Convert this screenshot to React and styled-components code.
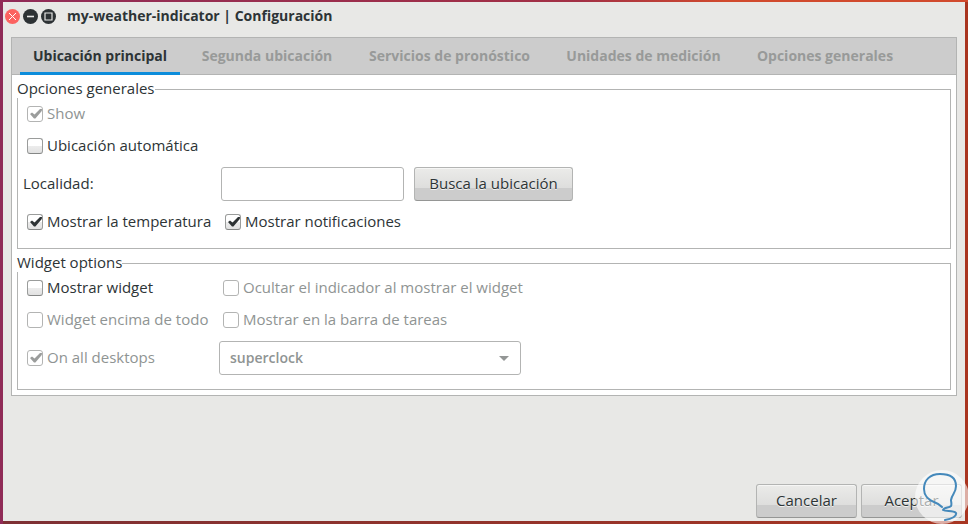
import React, { useState } from 'react';
import styled, { createGlobalStyle } from 'styled-components';

const GlobalStyle = createGlobalStyle`
  * {
    box-sizing: border-box;
  }

  body {
    margin: 0;
    color: #2d3436;
    font-family: 'Open Sans', 'Noto Sans', sans-serif;
    font-size: 15px;
    line-height: 16px;
  }

  button, input, select {
    margin: 0;
    color: inherit;
    font: inherit;
  }
`;

const tabs = [
  { name: 'Ubicación principal', width: 160 },
  { name: 'Segunda ubicación', width: 158 },
  { name: 'Servicios de pronóstico', width: 191 },
  { name: 'Unidades de medición', width: 181 },
  { name: 'Opciones generales', width: 166 },
];

const Check = ({ children, ...props }) => (
  <CheckLabel>
    <CheckBox>
      <input type="checkbox" {...props} />
      <svg viewBox="0 0 16 16" aria-hidden="true">
        <path d="M3 8 L5 6.4 L7.5 8.6 L13 3 L15 3 L14.8 5 L8.4 12.6 L7 12.6 Z" />
      </svg>
    </CheckBox>
    <Caption>{children}</Caption>
  </CheckLabel>
);

const App = () => {
  const [active, setActive] = useState(0);

  return (
    <Desktop>
      <GlobalStyle />
      <Window>
        <TitleBar>
          <WindowButton $close aria-label="Cerrar">
            <svg viewBox="0 0 15 15"><path d="M4 4 L11 11 M11 4 L4 11" /></svg>
          </WindowButton>
          <WindowButton aria-label="Minimizar">
            <svg viewBox="0 0 15 15"><path d="M4 7.5 H11" strokeWidth="1.6" /></svg>
          </WindowButton>
          <WindowButton aria-label="Maximizar">
            <svg viewBox="0 0 15 15"><path d="M4 4 H11 V11 H4 Z" strokeWidth="1.2" /></svg>
          </WindowButton>
          <Title>my-weather-indicator | Configuración</Title>
        </TitleBar>

        <Notebook>
          <TabList role="tablist">
            {tabs.map((tab, i) => (
              <Tab
                key={tab.name}
                role="tab"
                aria-selected={active === i}
                $active={active === i}
                $width={tab.width}
                onClick={() => setActive(i)}
              >
                {tab.name}
              </Tab>
            ))}
          </TabList>

          <Page role="tabpanel">
            <Group>
              <legend>Opciones generales</legend>
              <Row>
                <Check defaultChecked disabled>Show</Check>
              </Row>
              <Row>
                <Check>Ubicación automática</Check>
              </Row>
              <Row $tall>
                <Caption as="label" htmlFor="localidad">Localidad:</Caption>
                <Fields>
                  <Entry id="localidad" type="text" />
                  <Button>Busca la ubicación</Button>
                </Fields>
              </Row>
              <Row>
                <Check defaultChecked>Mostrar la temperatura</Check>
                <Check defaultChecked>Mostrar notificaciones</Check>
              </Row>
            </Group>

            <Group $compact>
              <legend>Widget options</legend>
              <Row $narrow>
                <Check>Mostrar widget</Check>
                <Check disabled>Ocultar el indicador al mostrar el widget</Check>
              </Row>
              <Row $narrow>
                <Check disabled>Widget encima de todo</Check>
                <Check disabled>Mostrar en la barra de tareas</Check>
              </Row>
              <Row $narrow $tall>
                <Check defaultChecked disabled>On all desktops</Check>
                <SelectBox>
                  <select aria-label="Skin" disabled>
                    <option>superclock</option>
                  </select>
                  <svg viewBox="0 0 10 5" aria-hidden="true"><path d="M0 0 H10 L5 5 Z" /></svg>
                </SelectBox>
              </Row>
            </Group>
          </Page>
        </Notebook>

        <Actions>
          <Button $action>Cancelar</Button>
          <Button $action>Aceptar</Button>
        </Actions>
      </Window>

      <Watermark viewBox="0 0 60 60" aria-hidden="true">
        <circle cx="34" cy="33" r="27" />
        <path d="M34 43 C31 40 29 39 26 38 C20 36 16 31 16 25 C16 16 22 10 32 10 C42 10 48 14 48 22 C48 29 44 30 43 36 C43 38 44 40 43 42 C41 44 36 43 35 46 C38 48 45 46 48 49 C49 52 44 55 37 56" />
      </Watermark>
    </Desktop>
  );
};

const Desktop = styled.div`
  position: relative;
  display: flex;
  min-height: 100vh;
  padding: 2px 3px 3px;
  background:
    linear-gradient(to right, #902b57, #a33045 60%, #d14a2d 75%) top / 100% 2px no-repeat,
    linear-gradient(#902b57, #902b57) left / 3px 100% no-repeat,
    linear-gradient(to right, #7d3034, #a83622) bottom / 100% 3px no-repeat,
    #a93520;
`;

const Window = styled.div`
  display: flex;
  flex: 1;
  flex-direction: column;
  background: #e8e8e6;
`;

const TitleBar = styled.header`
  display: flex;
  align-items: center;
  gap: 3px;
  height: 28px;
  padding-left: 2px;
`;

const WindowButton = styled.button`
  width: 15px;
  height: 15px;
  padding: 0;
  border: 0;
  border-radius: 50%;
  background: ${props => (props.$close ? '#fc6360' : '#2d3234')};

  svg {
    display: block;
    fill: none;
    stroke: ${props => (props.$close ? '#fff' : '#e8e8e6')};
  }
`;

const Title = styled.h1`
  margin: 0 0 0 8px;
  font-size: 14px;
  font-weight: 700;
`;

const Notebook = styled.main`
  margin: 7px 8px 0;
  border: 1px solid #b3b4b3;
  background: #fff;
`;

const TabList = styled.div`
  display: flex;
  gap: 8px;
  height: 37px;
  padding: 0 8px;
  border-bottom: 1px solid #b3b4b3;
  background: #cccccc;
`;

const Tab = styled.button`
  min-width: ${props => props.$width}px;
  height: 37px;
  padding: 1px 0 0;
  border: 0;
  border-bottom: 3px solid ${props => (props.$active ? '#0d8ddb' : 'transparent')};
  background: none;
  color: ${props => (props.$active ? '#2d3436' : '#989a99')};
  font-size: 14px;
  font-weight: 700;
`;

const Page = styled.div`
  display: flex;
  flex-direction: column;
  gap: 5px;
  padding: 5px;
`;

const Group = styled.fieldset`
  min-width: 0;
  margin: 0;
  padding: 0 5px ${props => (props.$compact ? 9 : 10)}px;
  border: 1px solid #b3b4b3;

  legend {
    margin-left: -6px;
    padding: 0 0 2px;
    background: #fff;
  }
`;

const Row = styled.div`
  display: grid;
  grid-template-columns: ${props => (props.$narrow ? 196 : 198)}px 1fr;
  align-items: center;
  height: ${props => (props.$tall ? 44 : 32)}px;
`;

const CheckLabel = styled.label`
  display: flex;
  align-items: center;
  justify-self: start;
  gap: 4px;
  padding-left: 4px;
  white-space: nowrap;

  &:has(input:disabled) {
    color: #8f9493;
  }
`;

const Caption = styled.span`
  padding-bottom: 2px;
`;

const CheckBox = styled.span`
  display: grid;
  width: 16px;
  height: 16px;

  input, svg {
    grid-area: 1 / 1;
    width: 16px;
    height: 16px;
  }

  input {
    appearance: none;
    border: 1px solid #9a9c9b;
    border-bottom-color: #858786;
    border-radius: 3px;
    background: linear-gradient(#fff 50%, #ececec 50%, #e2e2e2);
  }

  input:disabled {
    border-color: #b3b4b3;
    background: #fff;
  }

  svg {
    visibility: hidden;
    fill: #2d3234;
    pointer-events: none;
  }

  input:checked + svg {
    visibility: visible;
  }

  input:disabled + svg {
    fill: #9b9d9c;
  }
`;

const Fields = styled.div`
  display: flex;
  gap: 10px;
`;

const Entry = styled.input`
  width: 183px;
  height: 34px;
  padding: 0 8px;
  border: 1px solid #b3b4b3;
  border-radius: 3px;
  background: #fff;
`;

const Button = styled.button`
  min-width: ${props => (props.$action ? 101 : 159)}px;
  height: 34px;
  padding: 0 8px 2px;
  border: 1px solid #b3b4b3;
  border-bottom-color: #959695;
  border-radius: 3px;
  background: linear-gradient(#ebebe9, #dededd 61%, #cccccc 61%, #cccccc);
  box-shadow: inset 0 1px #f6f6f5;
  text-shadow: 0 1px #f2f2f1;
`;

const SelectBox = styled.div`
  display: grid;
  align-items: center;
  width: 302px;

  select, svg {
    grid-area: 1 / 1;
  }

  select {
    appearance: none;
    width: 100%;
    height: 34px;
    padding: 0 24px 0 10px;
    border: 1px solid #b3b4b3;
    border-radius: 3px;
    background: #fff;
    color: #8f9493;
    font-size: 14px;
    font-weight: 600;
    opacity: 1;
  }

  svg {
    justify-self: end;
    width: 10px;
    height: 5px;
    margin-right: 12px;
    fill: #939695;
    pointer-events: none;
  }
`;

const Actions = styled.footer`
  display: flex;
  justify-content: flex-end;
  gap: 4px;
  margin-top: auto;
  padding: 8px 3px 3px;
`;

// logo seal that floats over the corner of the window
const Watermark = styled.svg`
  position: absolute;
  right: 0;
  bottom: 0;
  width: 60px;
  height: 60px;
  pointer-events: none;

  circle {
    fill: rgba(255, 255, 255, 0.6);
  }

  path {
    fill: none;
    stroke: #4589bb;
    stroke-width: 2;
    stroke-linecap: round;
    stroke-linejoin: round;
  }
`;

export default App;
